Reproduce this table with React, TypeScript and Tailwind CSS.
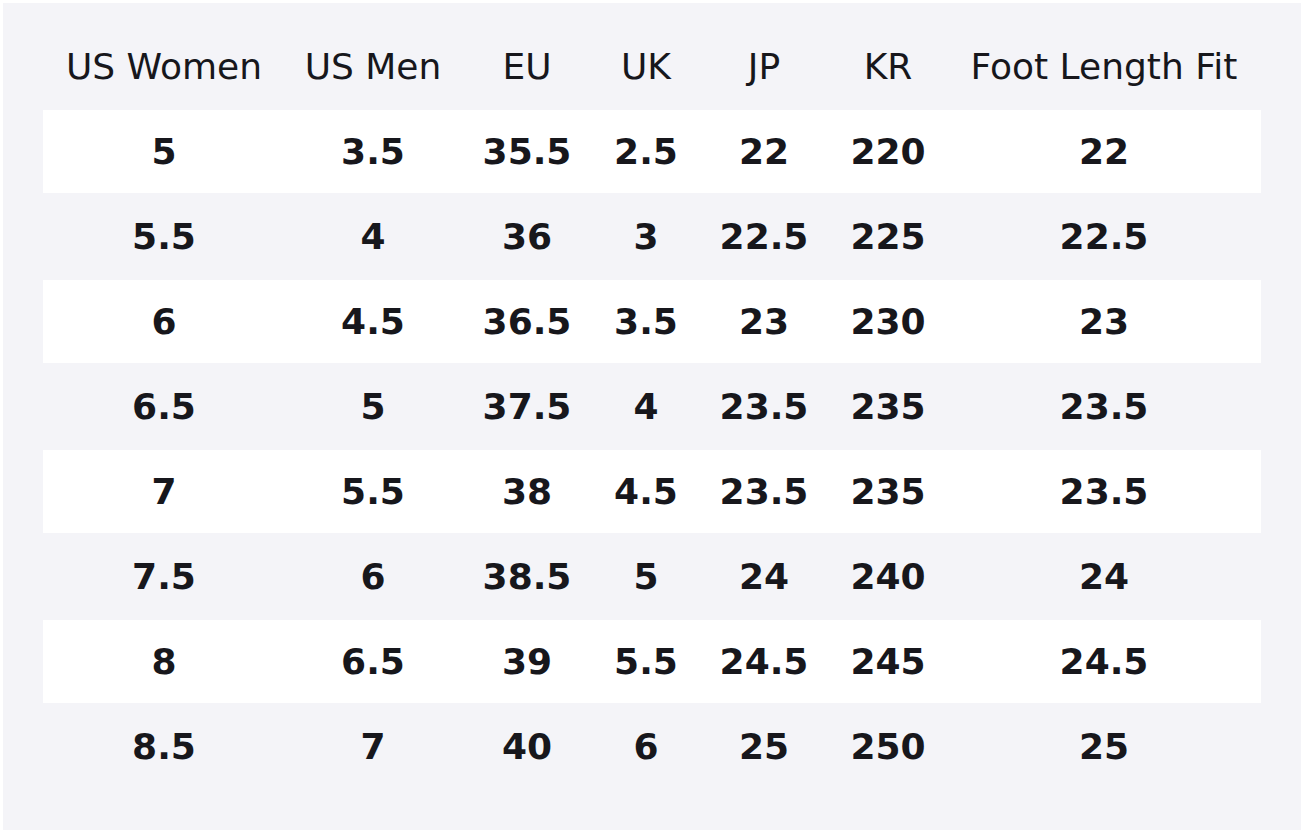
import React from "react";

const headers = ["US Women", "US Men", "EU", "UK", "JP", "KR", "Foot Length Fit"];
const rows = [
  ["5", "3.5", "35.5", "2.5", "22", "220", "22"],
  ["5.5", "4", "36", "3", "22.5", "225", "22.5"],
  ["6", "4.5", "36.5", "3.5", "23", "230", "23"],
  ["6.5", "5", "37.5", "4", "23.5", "235", "23.5"],
  ["7", "5.5", "38", "4.5", "23.5", "235", "23.5"],
  ["7.5", "6", "38.5", "5", "24", "240", "24"],
  ["8", "6.5", "39", "5.5", "24.5", "245", "24.5"],
  ["8.5", "7", "40", "6", "25", "250", "25"],
];

const cols = "grid grid-cols-[242px_176px_132px_106px_130px_118px_314px]";

export default function App() {
  return (
    <div className="bg-white p-[3px]" style={{ fontFamily: '"DejaVu Sans", Verdana, sans-serif' }}>
      <div className="h-[827px] w-[1298px] bg-[#f4f4f8] px-[40px] pt-[20px] text-[#17171c]">
        <div className={`${cols} h-[87px] items-center text-[36px] font-normal`}>
          {headers.map((h) => (
            <div key={h} className="text-center whitespace-nowrap leading-none">
              {h}
            </div>
          ))}
        </div>
        {rows.map((r, i) => (
          <div
            key={i}
            className={`${cols} items-center text-[36px] font-bold ${
              i % 2 === 0 ? "h-[83px] bg-white" : "h-[87px] bg-transparent"
            }`}
          >
            {r.map((c, j) => (
              <div key={j} className="text-center leading-none">
                {c}
              </div>
            ))}
          </div>
        ))}
      </div>
    </div>
  );
}
